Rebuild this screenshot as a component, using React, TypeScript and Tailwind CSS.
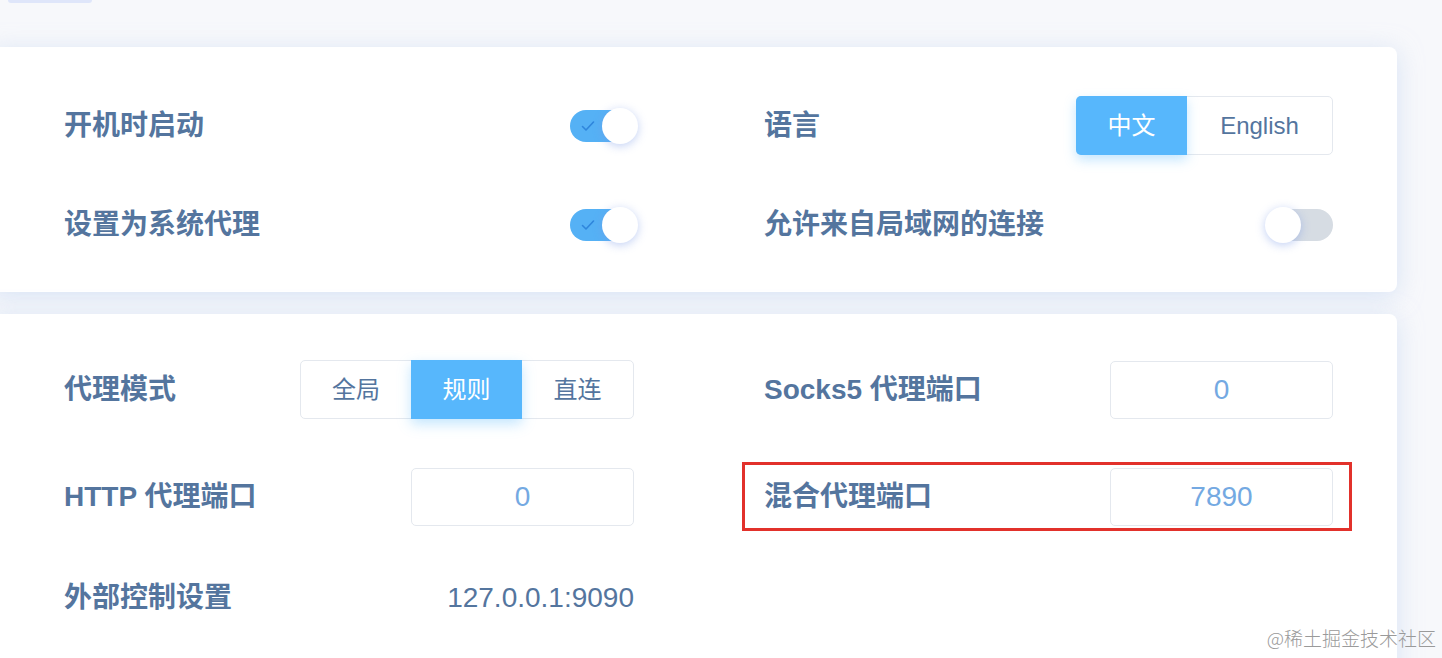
import type { ReactNode } from "react";

const font = { fontFamily: '"Liberation Sans", "Noto Sans CJK SC", sans-serif' };

function Toggle({ on }: { on: boolean }) {
    return (
        <div className="relative w-[64px] h-[32px]">
            <div
                className={
                    on
                        ? "absolute inset-0 rounded-full bg-[#55b1f5]"
                        : "absolute inset-0 rounded-full bg-[#d6dce3]"
                }
            />
            {on && (
                <svg className="absolute left-[11px] top-[10px]" width="14" height="12" viewBox="0 0 14 12">
                    <path d="M1.5 6.5 L5 10 L12.5 2" fill="none" stroke="#2f86dc" strokeWidth="1.6" strokeLinecap="round" strokeLinejoin="round" />
                </svg>
            )}
            <div
                className={
                    on
                        ? "absolute left-[32px] -top-[2px] w-[36px] h-[36px] rounded-full bg-white shadow-[0_2px_10px_rgba(120,150,230,0.45)]"
                        : "absolute -left-[4px] -top-[2px] w-[36px] h-[36px] rounded-full bg-white shadow-[0_2px_10px_rgba(120,150,230,0.45)]"
                }
            />
        </div>
    );
}

function Segmented({ items, active, widths }: { items: string[]; active: number; widths: string[] }) {
    return (
        <div className="flex h-[59px] rounded-[5px] border border-[#e4e8ee] bg-white">
            {items.map((item, i) => (
                <div
                    key={item}
                    className={
                        i === active
                            ? `${widths[i]} -my-px flex items-center justify-center bg-[#57b7fc] text-white text-[24px] shadow-[0_5px_12px_rgba(87,183,252,0.35)] ${i === 0 ? "rounded-l-[5px] -ml-px" : ""}`
                            : `${widths[i]} flex items-center justify-center text-[#54759e] text-[24px]`
                    }
                >
                    {item}
                </div>
            ))}
        </div>
    );
}

function PortInput({ value }: { value: string }) {
    return (
        <div className="w-[223px] h-[58px] flex items-center justify-center rounded-[5px] border border-[#e4e8ee] bg-white text-[28px] text-[#74a9e2]">
            {value}
        </div>
    );
}

function Row({ label, children }: { label: string; children?: ReactNode }) {
    return (
        <div className="flex items-center justify-between h-[59px]">
            <span className="text-[28px] font-bold text-[#54759e]">{label}</span>
            {children}
        </div>
    );
}

export default function App() {
    return (
        <div className="relative h-[658px] w-[1442px] overflow-hidden bg-[#f7f8fb]" style={font}>
            <div className="ml-[8px] h-[3px] w-[84px] rounded-b bg-[#dfe6fa]" />

            <div className="mt-[44px] -ml-[10px] w-[1407px] rounded-lg bg-white shadow-[0_4px_24px_rgba(190,210,240,0.55)] pl-[74px] pr-[64px] pt-[49px] pb-[38px]">
                <div className="grid grid-cols-[570px_569px] gap-x-[130px] gap-y-[40px]">
                    <Row label="开机时启动">
                        <Toggle on />
                    </Row>
                    <Row label="语言">
                        <Segmented items={["中文", "English"]} active={0} widths={["w-[111px]", "w-[145px]"]} />
                    </Row>
                    <Row label="设置为系统代理">
                        <Toggle on />
                    </Row>
                    <Row label="允许来自局域网的连接">
                        <Toggle on={false} />
                    </Row>
                </div>
            </div>

            <div className="mt-[22px] -ml-[10px] w-[1407px] h-[400px] rounded-lg bg-white shadow-[0_4px_24px_rgba(190,210,240,0.55)] pl-[74px] pr-[64px] pt-[46px]">
                <div className="grid grid-cols-[570px_569px] gap-x-[130px]">
                    <Row label="代理模式">
                        <Segmented items={["全局", "规则", "直连"]} active={1} widths={["w-[110px]", "w-[111px]", "w-[111px]"]} />
                    </Row>
                    <Row label="Socks5 代理端口">
                        <PortInput value="0" />
                    </Row>
                    <div className="mt-[48px]">
                        <Row label="HTTP 代理端口">
                            <PortInput value="0" />
                        </Row>
                    </div>
                    <div className="relative mt-[48px]">
                        <Row label="混合代理端口">
                            <PortInput value="7890" />
                        </Row>
                        <div className="absolute -left-[22px] -right-[19px] -top-[5px] -bottom-[5px] border-[3px] border-[#e2312b]" />
                    </div>
                    <div className="mt-[42px]">
                        <Row label="外部控制设置">
                            <span className="text-[28px] text-[#54759e]">127.0.0.1:9090</span>
                        </Row>
                    </div>
                </div>
            </div>

            <div
                className="absolute right-[6px] bottom-[6px] text-[19px] font-light text-[#9a9a9a]"
                style={{ fontFamily: '"Noto Sans CJK SC", sans-serif' }}
            >
                @稀土掘金技术社区
            </div>
        </div>
    );
}
